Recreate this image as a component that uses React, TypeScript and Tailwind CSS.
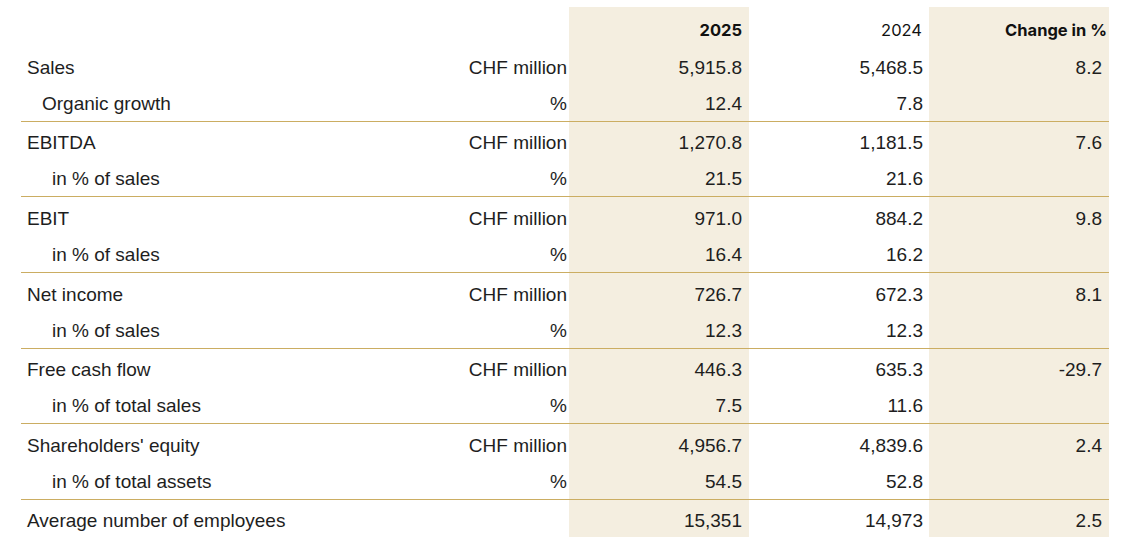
type Row = {
  label: string;
  unit: string;
  y25: string;
  y24: string;
  change: string;
  sub?: "organic" | "pct";
};

type Group = { pad: string; rows: Row[] };

const groups: Group[] = [
  {
    pad: "pt-[2px] h-[36px]",
    rows: [
      { label: "Sales", unit: "CHF million", y25: "5,915.8", y24: "5,468.5", change: "8.2" },
      { label: "Organic growth", unit: "%", y25: "12.4", y24: "7.8", change: "", sub: "organic" },
    ],
  },
  {
    pad: "pt-[4px] h-[38px]",
    rows: [
      { label: "EBITDA", unit: "CHF million", y25: "1,270.8", y24: "1,181.5", change: "7.6" },
      { label: "in % of sales", unit: "%", y25: "21.5", y24: "21.6", change: "", sub: "pct" },
    ],
  },
  {
    pad: "pt-[5px] h-[39px]",
    rows: [
      { label: "EBIT", unit: "CHF million", y25: "971.0", y24: "884.2", change: "9.8" },
      { label: "in % of sales", unit: "%", y25: "16.4", y24: "16.2", change: "", sub: "pct" },
    ],
  },
  {
    pad: "pt-[5px] h-[39px]",
    rows: [
      { label: "Net income", unit: "CHF million", y25: "726.7", y24: "672.3", change: "8.1" },
      { label: "in % of sales", unit: "%", y25: "12.3", y24: "12.3", change: "", sub: "pct" },
    ],
  },
  {
    pad: "pt-[4px] h-[38px]",
    rows: [
      { label: "Free cash flow", unit: "CHF million", y25: "446.3", y24: "635.3", change: "-29.7" },
      { label: "in % of total sales", unit: "%", y25: "7.5", y24: "11.6", change: "", sub: "pct" },
    ],
  },
  {
    pad: "pt-[5px] h-[39px]",
    rows: [
      { label: "Shareholders' equity", unit: "CHF million", y25: "4,956.7", y24: "4,839.6", change: "2.4" },
      { label: "in % of total assets", unit: "%", y25: "54.5", y24: "52.8", change: "", sub: "pct" },
    ],
  },
];

function DataRow({ row, first, pad, rule }: { row: Row; first: boolean; pad: string; rule: boolean }) {
  // first row in a group carries the gold rule and the extra top padding
  const cell = first ? pad : "pt-[2px] h-[36px]";
  const indent = row.sub === "organic" ? "pl-[21px]" : row.sub === "pct" ? "pl-[31px]" : "pl-[6px]";
  return (
    <div className={`grid grid-cols-[548px_180px_180px_180px] ${first && rule ? "border-t border-[#cbad62]" : ""}`}>
      <div className={`flex items-center justify-between pr-[2px] ${cell}`}>
        <span className={indent}>{row.label}</span>
        <span>{row.unit}</span>
      </div>
      <div className={`flex items-center justify-end pr-[7px] bg-[#f4eee0] ${cell}`}>{row.y25}</div>
      <div className={`flex items-center justify-end pr-[6px] ${cell}`}>{row.y24}</div>
      <div className={`flex items-center justify-end pr-[7px] bg-[#f4eee0] ${cell}`}>{row.change}</div>
    </div>
  );
}

export default function App() {
  return (
    <div className="w-[1128px] h-[554px] bg-white pt-[7px] pl-[21px] overflow-hidden">
      <div
        className="w-[1088px] text-[19px] leading-[22px] text-[#1e1e1e]"
        style={{ fontFamily: '"Liberation Sans", Arial, sans-serif' }}
      >
        {/* Header */}
        <div
          className="grid grid-cols-[548px_180px_180px_180px] text-[16.5px] leading-[19px] text-[#111]"
          style={{ fontFamily: 'Inter, "Liberation Sans", sans-serif' }}
        >
          <div className="h-[42px]" />
          <div className="h-[42px] pt-[14px] pr-[7px] text-right font-bold bg-[#f4eee0]">2025</div>
          <div className="h-[42px] pt-[14px] pr-[7px] text-right">2024</div>
          <div className="h-[42px] pt-[14px] pr-[2px] text-right font-bold bg-[#f4eee0]">Change in %</div>
        </div>

        {groups.map((g, gi) => (
          <div key={gi}>
            {g.rows.map((r, ri) => (
              <DataRow key={ri} row={r} first={ri === 0} pad={g.pad} rule={gi > 0} />
            ))}
          </div>
        ))}

        <div className="grid grid-cols-[548px_180px_180px_180px] border-t border-[#cbad62]">
          <div className="h-[37px] pt-[4px] pl-[6px] flex items-center">Average number of employees</div>
          <div className="h-[37px] pt-[4px] pr-[7px] flex items-center justify-end bg-[#f4eee0]">15,351</div>
          <div className="h-[37px] pt-[4px] pr-[6px] flex items-center justify-end">14,973</div>
          <div className="h-[37px] pt-[4px] pr-[7px] flex items-center justify-end bg-[#f4eee0]">2.5</div>
        </div>
      </div>
    </div>
  );
}
